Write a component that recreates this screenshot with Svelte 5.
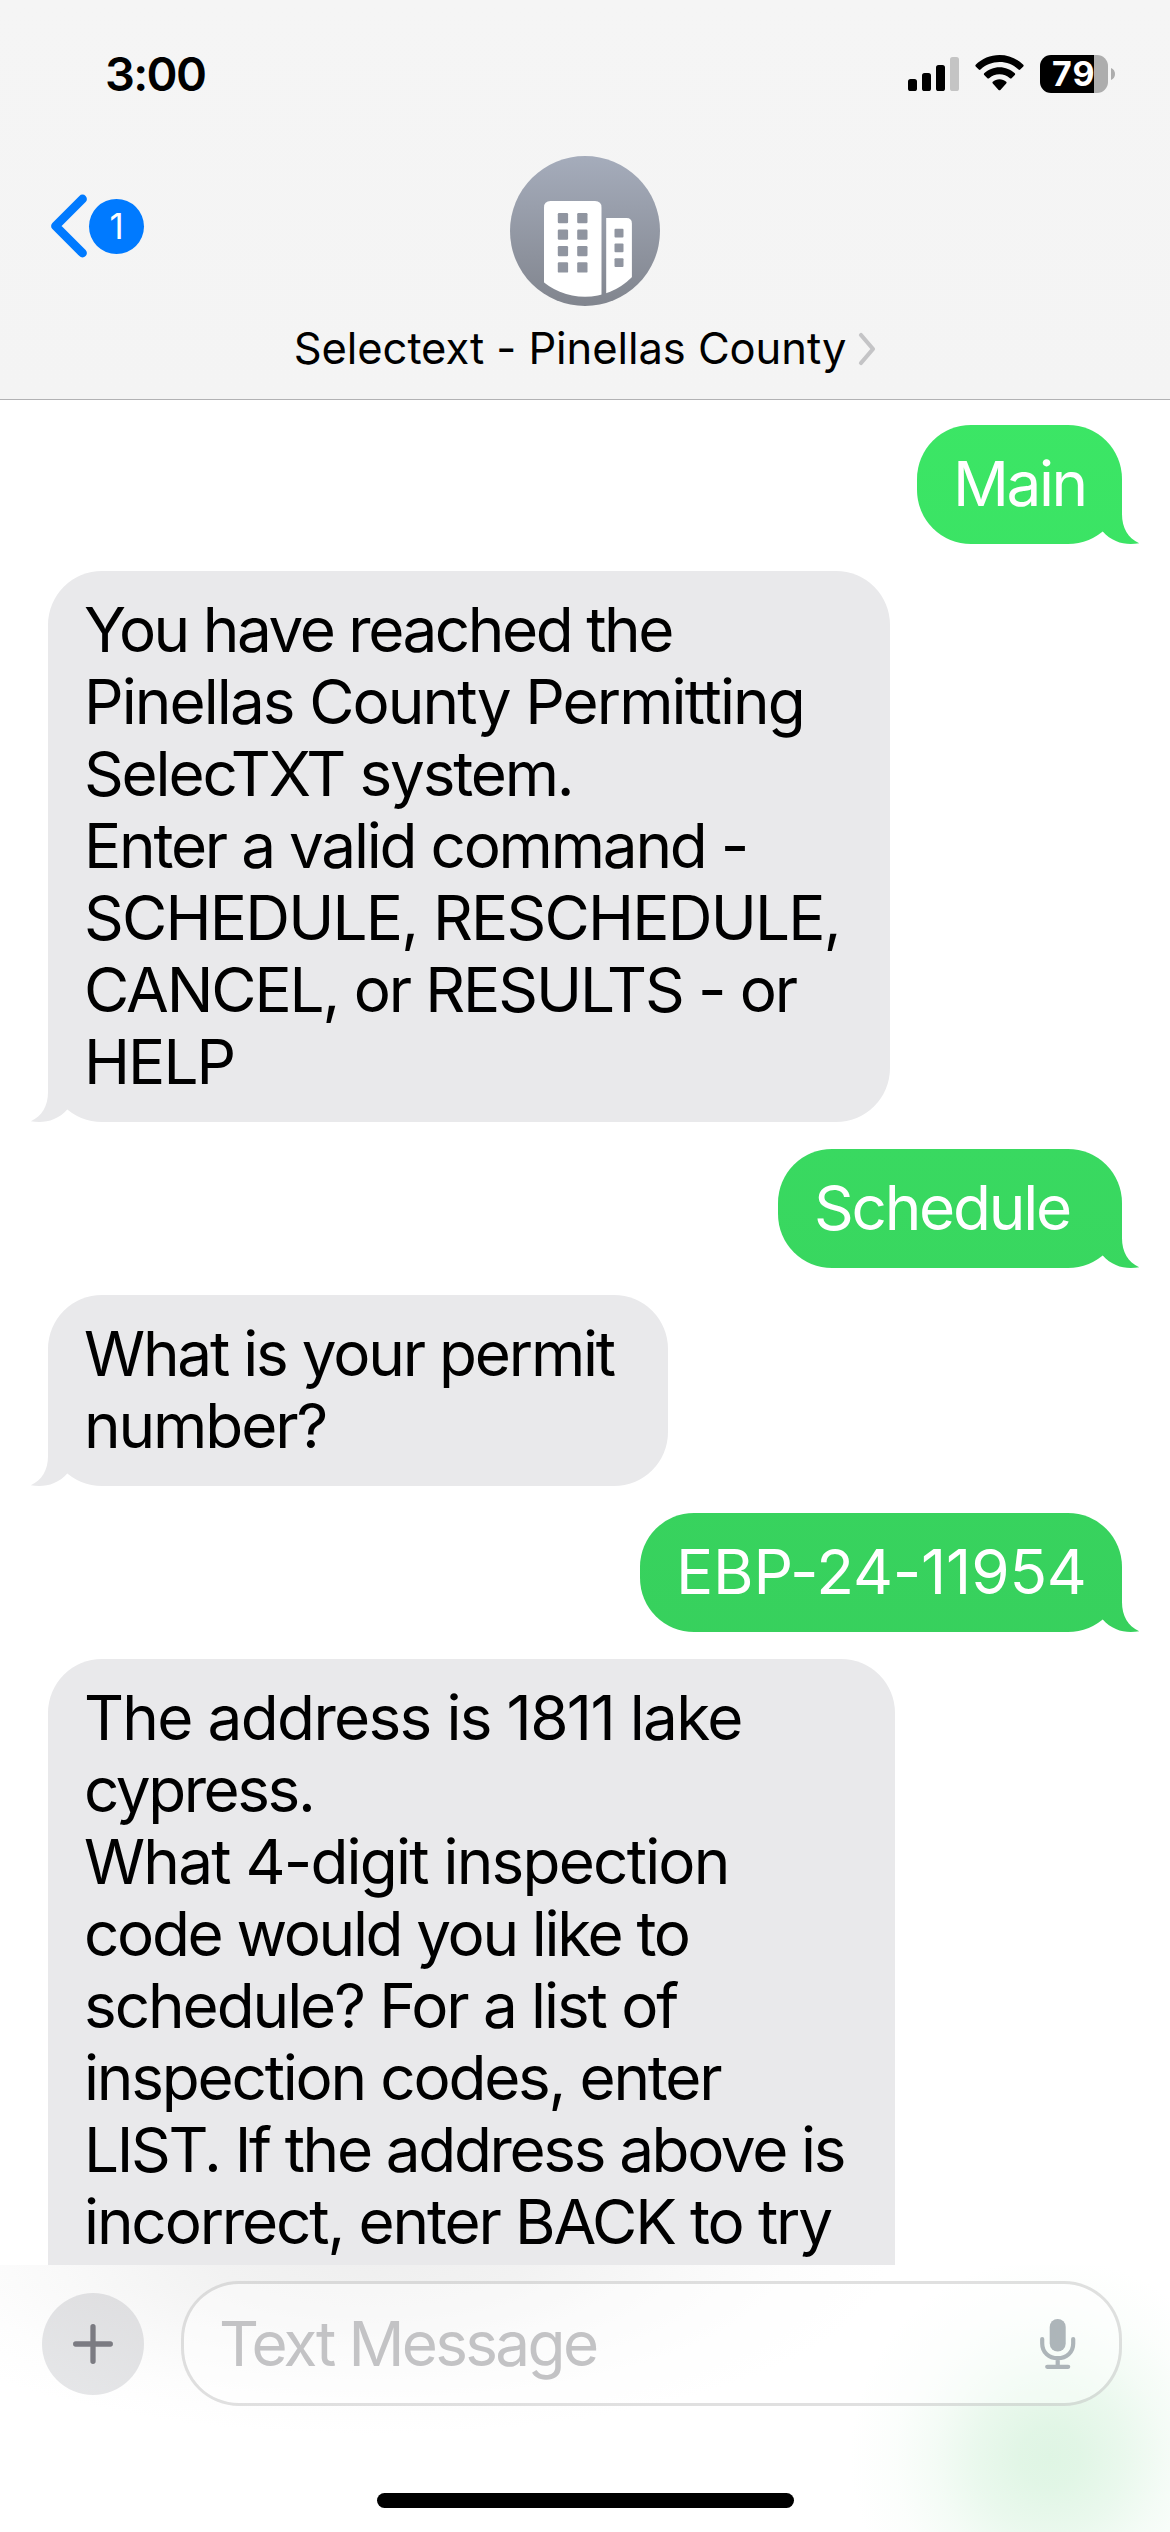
<script>
  // Each line carries its text and the width it should span, in pixels.
  const messages = [
    { from: 'me', width: 205, lines: [['Main', 125.5]] },
    {
      from: 'them',
      width: 842,
      lines: [
        ['You have reached the', 587.5],
        ['Pinellas County Permitting', 713],
        ['SelecTXT system.', 484],
        ['Enter a valid command -', 657],
        ['SCHEDULE, RESCHEDULE,', 750],
        ['CANCEL, or RESULTS - or', 710],
        ['HELP', 144.5]
      ]
    },
    { from: 'me', width: 344, lines: [['Schedule', 253]] },
    {
      from: 'them',
      width: 620,
      lines: [
        ['What is your permit', 531],
        ['number?', 237.5]
      ]
    },
    { from: 'me', width: 482, lines: [['EBP-24-11954', 403]] },
    {
      from: 'them',
      width: 847,
      open: true,
      lines: [
        ['The address is 1811 lake', 655.5],
        ['cypress.', 225],
        ['What 4-digit inspection', 641],
        ['code would you like to', 602],
        ['schedule? For a list of', 591.5],
        ['inspection codes, enter', 634.5],
        ['LIST. If the address above is', 755],
        ['incorrect, enter BACK to try', 745.5]
      ]
    }
  ];

  // Tracks a line so that its ink spans the given width.
  function track(node, width) {
    const style = getComputedStyle(node);
    const ctx = document.createElement('canvas').getContext('2d');
    ctx.font = `${style.fontWeight} ${style.fontSize} ${style.fontFamily}`;
    const text = node.textContent.trim();
    const m = ctx.measureText(text);
    const bearings = m.width - m.actualBoundingBoxRight - m.actualBoundingBoxLeft;
    // Any tracking turns ligatures off, so the line is measured in that state.
    node.style.letterSpacing = '0.01px';
    const advance = node.getBoundingClientRect().width;
    node.style.letterSpacing = `${((width + bearings - advance) / (text.length - 1)).toFixed(3)}px`;
  }

  const windowRows = [57, 73.5, 90, 106.3];
  const sideRows = [72.8, 87.4, 102.2];
</script>

<div class="phone">
  <header>
    <div class="status">
      <span class="time" use:track={98}>3:00</span>
      <div class="indicators">
        <svg class="signal" viewBox="0 0 51 34">
          <rect x="0" y="22" width="9" height="12" rx="2.6" />
          <rect x="14" y="16" width="9" height="18" rx="2.6" />
          <rect x="28" y="8" width="9" height="26" rx="2.6" />
          <rect x="42" y="0" width="9" height="34" rx="2.6" fill="#c4c4c4" />
        </svg>
        <svg class="wifi" viewBox="0 0 49 36">
          <path d="M24.5 0C15.300 0 6.900 3.700 .7 9.700C.2 10.200 .2 10.900 .7 11.400L3.800 14.600C4.300 15.100 5 15.100 5.500 14.600C10.500 9.900 17.200 7.100 24.500 7.100S38.500 9.900 43.500 14.600C44 15.100 44.700 15.100 45.200 14.600L48.300 11.400C48.800 10.900 48.800 10.200 48.300 9.700C42.100 3.700 33.700 0 24.500 0Z" />
          <path d="M24.500 12.200C18.600 12.200 13.200 14.500 9.200 18.300C8.700 18.800 8.700 19.500 9.200 20L12.400 23.200C12.900 23.700 13.600 23.700 14.100 23.300C16.900 20.800 20.500 19.300 24.500 19.300S32.100 20.800 34.900 23.300C35.400 23.700 36.100 23.700 36.600 23.200L39.800 20C40.300 19.500 40.300 18.800 39.800 18.300C35.800 14.500 30.400 12.200 24.500 12.200Z" />
          <path d="M24.500 24.200C21.900 24.200 19.600 25.200 17.800 26.800C17.300 27.200 17.300 28 17.800 28.500L23.600 34.900C24.100 35.400 24.900 35.400 25.400 34.900L31.200 28.500C31.700 28 31.700 27.200 31.200 26.800C29.400 25.200 27.100 24.200 24.500 24.200Z" />
        </svg>
        <div class="battery">
          <span class="cell"><b use:track={40.5}>79</b></span>
          <svg class="nub" viewBox="0 0 4 12"><path d="M0 0C2.500 1 4 3.300 4 6S2.500 11 0 12Z" /></svg>
        </div>
      </div>
    </div>

    <div class="nav">
      <div class="back">
        <svg viewBox="0 0 38 64"><path d="M32.500 5L5.500 32L32.500 59" /></svg>
        <span class="count">1</span>
      </div>
      <div class="contact">
        <svg class="avatar" viewBox="0 0 150 150">
          <defs>
            <linearGradient id="disc" x1="0" y1="0" x2="0" y2="1">
              <stop offset="0" stop-color="#a5acbb" />
              <stop offset="1" stop-color="#81858e" />
            </linearGradient>
            <clipPath id="inner"><circle cx="75" cy="75" r="65.8" /></clipPath>
          </defs>
          <circle cx="75" cy="75" r="75" fill="url(#disc)" />
          <g clip-path="url(#inner)" fill="#fff">
            <path d="M34 150V51.500Q34 45 40.500 45H85Q91.500 45 91.500 51.500V150Z" />
            <path d="M96.200 150V62H116.500Q121.900 62 121.900 67.500V150Z" />
          </g>
          <g fill="#9095a0">
            {#each windowRows as y}
              <rect x="47.8" {y} width="10.3" height="10.3" rx="1.2" />
              <rect x="67.2" {y} width="10.3" height="10.3" rx="1.2" />
            {/each}
            {#each sideRows as y}
              <rect x="104.5" {y} width="9" height="8.8" rx="1" />
            {/each}
          </g>
        </svg>
        <div class="name">
          <span use:track={550.5}>Selectext - Pinellas County</span>
          <svg viewBox="0 0 18 34"><path d="M3 3L15 17L3 31" /></svg>
        </div>
      </div>
    </div>
  </header>

  <main>
    {#each messages as message}
      <div
        class="bubble {message.from}"
        class:open={message.open}
        style:width="{message.width}px"
      >
        {#each message.lines as [text, width]}
          <p><span use:track={width}>{text}</span></p>
        {/each}
      </div>
    {/each}
  </main>

  <footer>
    <div class="composer">
      <div class="plus">
        <svg viewBox="0 0 40 40"><path d="M20 2.700V37.300M2.700 20H37.300" /></svg>
      </div>
      <div class="field">
        <span class="placeholder" use:track={376}>Text Message</span>
        <svg class="mic" viewBox="0 0 36 50">
          <rect class="capsule" x="9.7" y="0" width="16" height="32.5" rx="8" />
          <path d="M2.200 20V24.500C2.200 33.500 9 39.200 17.700 39.200S33.200 33.500 33.200 24.500V20M17.700 39.200V47.800M7.200 47.800H28.200" />
        </svg>
      </div>
    </div>
    <div class="home"></div>
  </footer>
</div>

<style>
  :global(body) {
    margin: 0;
    background: #fff;
  }

  .phone {
    width: 1170px;
    height: 2532px;
    display: flex;
    flex-direction: column;
    overflow: hidden;
    background: #fff;
    color: #000;
    font-family: Inter, 'Liberation Sans', sans-serif;
  }

  svg {
    display: block;
    flex: none;
  }

  header {
    box-sizing: border-box;
    height: 400px;
    flex: none;
    background: linear-gradient(#f5f5f5, #f4f4f4);
    border-bottom: 1px solid #b2b2b4;
  }

  .status {
    box-sizing: border-box;
    height: 156px;
    padding: 45px 55px 0 105px;
    display: flex;
    justify-content: space-between;
    align-items: flex-start;
  }

  .time {
    font-size: 47px;
    line-height: 58px;
    font-weight: 600;
  }

  .indicators {
    display: flex;
    align-items: flex-start;
    padding-top: 10px;
  }

  .signal {
    width: 51px;
    height: 34px;
    margin: 2px 16px 0 0;
  }

  .wifi {
    width: 49px;
    height: 36px;
    margin-right: 16px;
  }

  .battery {
    display: flex;
    align-items: center;
    gap: 3px;
  }

  .cell {
    width: 68px;
    height: 38px;
    border-radius: 11px;
    background: linear-gradient(90deg, #000 54px, #adadad 54px);
    color: #fff;
    display: flex;
    align-items: center;
  }

  .cell b {
    margin-left: 12px;
    font-size: 34px;
    line-height: 38px;
    font-weight: 700;
  }

  .nub {
    width: 4px;
    height: 12px;
    fill: #adadad;
  }

  .nav {
    display: grid;
    grid-template-columns: 260px 1fr 260px;
  }

  .back {
    height: 64px;
    padding: 38px 0 0 50px;
    display: flex;
    align-items: center;
  }

  .back svg {
    width: 38px;
    height: 64px;
    fill: none;
    stroke: #007aff;
    stroke-width: 8.8;
    stroke-linecap: round;
    stroke-linejoin: round;
  }

  .count {
    width: 55px;
    height: 55px;
    margin-left: 1px;
    border-radius: 50%;
    background: #007aff;
    color: #fff;
    font-size: 35px;
    line-height: 55px;
    text-align: center;
  }

  .contact {
    display: flex;
    flex-direction: column;
    align-items: center;
  }

  .avatar {
    width: 150px;
    height: 150px;
  }

  .name {
    margin-top: 16px;
    display: flex;
    align-items: center;
    gap: 12px;
    font-size: 43.5px;
    line-height: 53px;
    white-space: nowrap;
  }

  .name svg {
    width: 18px;
    height: 34px;
    fill: none;
    stroke: #c4c4c6;
    stroke-width: 4.2;
    stroke-linecap: round;
    stroke-linejoin: round;
  }

  main {
    box-sizing: border-box;
    height: 1865px;
    flex: none;
    overflow: hidden;
    padding: 25px 48px 0;
    display: flex;
    flex-direction: column;
    align-items: flex-start;
    gap: 27px;
  }

  .bubble {
    box-sizing: border-box;
    position: relative;
    flex: none;
    padding: 23px 0 24px 36px;
    border-radius: 54px;
    background: #e9e9eb;
    font-size: 62px;
    line-height: 72px;
    white-space: nowrap;
  }

  .bubble::after {
    content: '';
    position: absolute;
    bottom: 0;
    left: -18px;
    width: 72px;
    height: 54px;
    background: inherit;
    clip-path: path('M18 0V24C18 38 12 48 .8 53.300C14 55.500 27 53 37.500 41.300V0Z');
  }

  .me {
    align-self: flex-end;
    background: linear-gradient(#3ded68, #34c157) fixed;
    color: #fff;
  }

  .me::after {
    left: auto;
    right: -18px;
    clip-path: path('M54 0V24C54 38 60 48 71.200 53.300C58 55.500 45 53 34.500 41.300V0Z');
  }

  .open {
    padding-bottom: 100px;
  }

  p {
    margin: 0;
  }

  footer {
    box-sizing: border-box;
    flex: 1;
    padding: 16px 48px 0 42px;
    display: flex;
    flex-direction: column;
    align-items: center;
    background:
      radial-gradient(
        circle at 1050px 192px,
        #dff5e4 0,
        rgba(223, 245, 228, 0.93) 30px,
        rgba(223, 245, 228, 0.66) 75px,
        rgba(223, 245, 228, 0.34) 115px,
        rgba(223, 245, 228, 0.12) 155px,
        rgba(223, 245, 228, 0) 200px
      ),
      radial-gradient(
        ellipse 520px 180px at 370px -10px,
        #efefef 0,
        #f2f2f2 30%,
        #f9f9f9 60%,
        #fdfdfd 80%,
        #fff 100%
      );
  }

  .composer {
    width: 100%;
    display: flex;
    align-items: center;
    gap: 37px;
  }

  .plus {
    width: 102px;
    height: 102px;
    flex: none;
    border-radius: 50%;
    background: linear-gradient(205deg, #dedee0, #e6e7e9);
    display: flex;
    align-items: center;
    justify-content: center;
  }

  .plus svg {
    width: 40px;
    height: 40px;
    fill: none;
    stroke: #7b7b82;
    stroke-width: 5.3;
    stroke-linecap: round;
  }

  .field {
    box-sizing: border-box;
    flex: 1;
    height: 125px;
    padding: 0 43px 0 35px;
    border: 3px solid rgba(0, 0, 0, 0.12);
    border-radius: 58px;
    background: rgba(255, 255, 255, 0.45);
    display: flex;
    align-items: center;
    justify-content: space-between;
  }

  .placeholder {
    font-size: 62px;
    line-height: 72px;
    color: #c3c3c5;
    white-space: nowrap;
  }

  .mic {
    width: 36px;
    height: 50px;
    fill: none;
    stroke: #adb5b9;
    stroke-width: 4.2;
    stroke-linecap: round;
  }

  .capsule {
    fill: #adb5b9;
    stroke: none;
  }

  .home {
    width: 417px;
    height: 15px;
    margin: 87px 0 0 7px;
    border-radius: 8px;
    background: #000;
  }
</style>
